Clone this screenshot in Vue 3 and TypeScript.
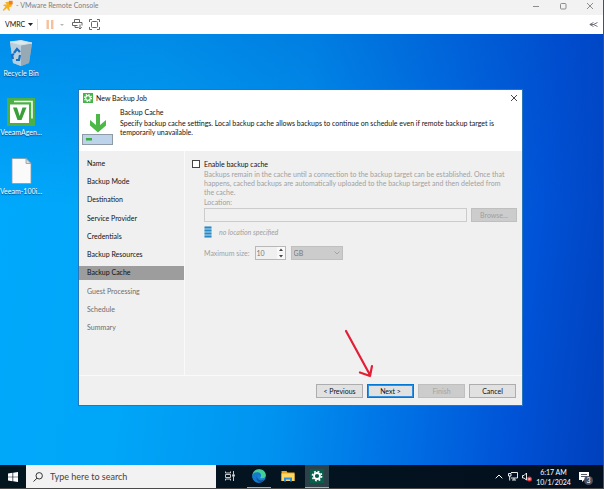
<script setup lang="ts">
import { ref } from 'vue'

interface Step {
  name: string
  enabled: boolean
}

const steps: Step[] = [
  { name: 'Name', enabled: true },
  { name: 'Backup Mode', enabled: true },
  { name: 'Destination', enabled: true },
  { name: 'Service Provider', enabled: true },
  { name: 'Credentials', enabled: true },
  { name: 'Backup Resources', enabled: true },
  { name: 'Backup Cache', enabled: true },
  { name: 'Guest Processing', enabled: false },
  { name: 'Schedule', enabled: false },
  { name: 'Summary', enabled: false },
]
const current = ref('Backup Cache')
const cacheEnabled = ref(false)
const location = ref('')
const maxSize = ref('10')
const unit = ref('GB')
const query = ref('')
</script>

<template>
  <div class="screen">
    <header class="titlebar">
      <svg class="app-icon" viewBox="0 0 12 12">
        <path d="M3 2.5 9 1 10.5 2.5 9.5 6.5 7 7.5 8 11 6 10 5 8 1.5 11 0.8 10 3.5 6.5 1 5.5 2 4.5 5 4.5Z" fill="#f9b01c" />
        <rect x="7" y="0.8" width="3.6" height="3.6" fill="#ef7d22" />
      </svg>
      <span class="app-title">- VMware Remote Console</span>
      <div class="caption-buttons">
        <button aria-label="Minimize"><svg viewBox="0 0 8 8"><path d="M1 4.5h6" /></svg></button>
        <button aria-label="Maximize"><svg viewBox="0 0 8 8"><rect x="1.5" y="1.5" width="5.5" height="5.5" rx="1" /></svg></button>
        <button aria-label="Close"><svg viewBox="0 0 8 8"><path d="M1 1l6 6M7 1L1 7" /></svg></button>
      </div>
    </header>

    <nav class="toolbar">
      <button class="vmrc">VMRC <svg viewBox="0 0 5 3"><path d="M0 0h5L2.5 3Z" fill="#222" /></svg></button>
      <i class="divider"></i>
      <button class="pause" aria-label="Pause"><svg viewBox="0 0 8 9"><path d="M0.5 0h2.4v9H0.5ZM5 0h2.4v9H5Z" fill="#f8bf9b" /></svg></button>
      <button class="mini" aria-label="Power options"><svg viewBox="0 0 4 2"><path d="M0 0h4L2 2Z" fill="#b5b5b5" /></svg></button>
      <button class="tool" aria-label="Send Ctrl+Alt+Del">
        <svg viewBox="0 0 11 11" fill="none" stroke="#666" stroke-width="1"><path d="M2.5 3.5v-3h5v3M5.500 6.500h-5v-3h9.500v3M3 6.500v2h3M8 5.500v4.500M6.300 8.300 8 10l1.700-1.700" /></svg>
      </button>
      <button class="tool" aria-label="Full screen">
        <svg viewBox="0 0 11 11" fill="none" stroke="#666" stroke-width="1"><path d="M0.500 3V0.500H3M8 0.500h2.500V3M10.500 8v2.500H8M3 10.500H0.500V8" /><rect x="2.500" y="2.500" width="6" height="6" rx="1" /></svg>
      </button>
      <button class="collapse" aria-label="Collapse"><svg viewBox="0 0 9 5" fill="none" stroke="#667" stroke-width=".9"><path d="M4.500 .5 .8 2.500 4.500 4.500M8.500 .5 4.500 2.500 8.500 4.500M1 2.500h4" /></svg></button>
    </nav>

    <main class="desktop">
      <div class="shortcuts">
        <a class="shortcut" href="#">
          <svg viewBox="0 0 28 28">
            <path d="M3 3 14 1.500 25 4 22 24 14 27 6 24Z" fill="#8fb3c9" />
            <path d="M3 3 14 6 14 27 6 24Z" fill="#b8cfdb" />
            <path d="M14 6 25 4 22 24 14 27Z" fill="#97a9b5" />
            <path d="M3 3 14 1.500 25 4 14 6Z" fill="#dfe8ec" stroke="#d3e0e6" />
            <path d="M7 14l3-4 3 3M13 16l-1 5H9M6 20l-1-4 2-1" fill="none" stroke="#146fc4" stroke-width="2.200" />
          </svg>
          <span>Recycle Bin</span>
        </a>
        <a class="shortcut" href="#">
          <svg viewBox="0 0 28 28">
            <rect width="28" height="28" fill="#4bb147" />
            <path d="M7 3.500h18v17" fill="none" stroke="#fff" stroke-width="1.500" />
            <rect x="3" y="6.500" width="19" height="18.500" fill="#fff" />
            <path d="M6 9.500h4l2.700 8.500L15.500 9.500h4L14.500 22h-4Z" fill="#3a9f3b" />
          </svg>
          <span>VeeamAgen...</span>
        </a>
        <a class="shortcut" href="#">
          <svg viewBox="0 0 28 28">
            <path d="M5 1.500h14l5 5v20H5Z" fill="#fafafa" stroke="#8b9aa5" stroke-width=".8" />
            <path d="M19 1.500v5h5Z" fill="#ddd" stroke="#8b9aa5" stroke-width=".8" />
          </svg>
          <span>Veeam-100i...</span>
        </a>
      </div>

      <section class="dialog" role="dialog" aria-labelledby="dialog-title">
        <div class="dialog-bar">
          <svg viewBox="0 0 10 10">
            <rect width="10" height="10" fill="#45b549" />
            <circle cx="5" cy="5" r="2.300" fill="none" stroke="#fff" stroke-width="1.200" />
            <circle cx="5" cy="5" r="3.500" fill="none" stroke="#fff" stroke-width="1.200" stroke-dasharray="1.300 1.449" />
          </svg>
          <span id="dialog-title">New Backup Job</span>
          <button aria-label="Close dialog"><svg viewBox="0 0 8 8"><path d="M1 1l6 6M7 1L1 7" /></svg></button>
        </div>
        <div class="intro">
          <svg viewBox="0 0 32 32">
            <path d="M14 0h4v11l6-5v5.500L16 18.500 8 11.500V6l6 5Z" fill="#4db848" />
            <rect x=".5" y="20.500" width="30" height="10" fill="#bcd3ea" stroke="#8e9aa5" />
            <rect x="4" y="24" width="6" height="2.500" fill="#36ad3c" />
          </svg>
          <div>
            <h1>Backup Cache</h1>
            <p>Specify backup cache settings. Local backup cache allows backups to continue on schedule even if remote backup target is temporarily unavailable.</p>
          </div>
        </div>
        <div class="body">
          <ol class="steps">
            <li v-for="s in steps" :key="s.name" :class="{ pending: !s.enabled }">
              <button :class="{ active: s.name === current }" :disabled="!s.enabled" @click="current = s.name">{{ s.name }}</button>
            </li>
          </ol>
          <form class="panel" @submit.prevent>
            <label class="check"><input v-model="cacheEnabled" type="checkbox" />Enable backup cache</label>
            <div class="settings">
              <p>Backups remain in the cache until a connection to the backup target can be established. Once that happens, cached backups are automatically uploaded to the backup target and then deleted from the cache.</p>
              <label for="location">Location:</label>
              <div class="row path">
                <input id="location" v-model="location" type="text" :disabled="!cacheEnabled" />
                <button type="button" :disabled="!cacheEnabled">Browse...</button>
              </div>
              <div class="row volume">
                <svg viewBox="0 0 8 12"><path d="M1 .5h6l.5 1v10h-7v-10Z" fill="#b5d9ee" /><path d="M.5 1.500h7M.5 4.500h7M.5 7.500h7M.5 10.500h7" stroke="#2989c4" stroke-width="2" /></svg>
                <em>no location specified</em>
              </div>
              <div class="row size">
                <label for="max-size">Maximum size:</label>
                <div class="spinner">
                  <input id="max-size" v-model="maxSize" type="text" :disabled="!cacheEnabled" />
                  <svg viewBox="0 0 8 12"><path d="M0 0h8v5.500H0ZM0 6.500h8V12H0Z" fill="#fafafa" /><path d="M2 4 4 1.500 6 4ZM2 8 4 10.500 6 8Z" fill="#444" /></svg>
                </div>
                <div class="unit">
                  <select v-model="unit" aria-label="Size unit" :disabled="!cacheEnabled">
                    <option>GB</option>
                    <option>TB</option>
                  </select>
                  <svg viewBox="0 0 6 4"><path d="M.5 .5 3 3 5.500 .5" fill="none" stroke="#999" stroke-width=".8" /></svg>
                </div>
              </div>
            </div>
          </form>
        </div>
        <footer class="actions">
          <button>&lt; Previous</button>
          <button class="primary">Next &gt;</button>
          <button disabled>Finish</button>
          <button>Cancel</button>
        </footer>
        <svg class="pointer" viewBox="0 0 30 50" fill="none" stroke="#e21f37" stroke-width="2.200" stroke-linecap="round" stroke-linejoin="round">
          <path d="M3 2 27 46M17 43.500 27 47 29 37" />
        </svg>
      </section>
    </main>

    <footer class="taskbar">
      <button class="start" aria-label="Start"><svg viewBox="0 0 10 10"><path d="M0 1.400 4.500 .8v3.900H0ZM5.200 .7 10 0v4.700H5.200ZM0 5.300h4.500v3.900L0 8.600ZM5.200 5.300H10V10L5.200 9.300Z" fill="#fff" /></svg></button>
      <label class="search">
        <svg viewBox="0 0 10 10" fill="none" stroke="#333" stroke-width="1"><circle cx="6.200" cy="3.800" r="3.200" /><path d="M4 6.200 .5 9.500" /></svg>
        <input v-model="query" type="text" placeholder="Type here to search" aria-label="Search" />
      </label>
      <button class="task" aria-label="Task view"><svg class="small" viewBox="0 0 10 10" fill="none" stroke="#ddd" stroke-width=".9"><path d="M.5 .5V2h5V.5M.5 9.500V8h5v1.500M.5 3.500h5v3h-5ZM8.500 0v3M8.500 6v4" /><path d="M7.700 3.700h1.600v1.600H7.700Z" fill="#ddd" /></svg></button>
      <button class="task open" aria-label="Microsoft Edge">
        <svg viewBox="0 0 14 14">
          <circle cx="7" cy="7" r="6.800" fill="#1683d2" />
          <path d="M.3 6C1 2.500 3.800 .2 7.200 .2c4 0 6.600 3 6.600 5.800 0 2.200-1.700 3.300-3.500 3.300-1.600 0-2.300-.7-1.800-1.300.8-1.500-.5-3.400-2.700-3.400C3.500 4.600 1.200 5 .3 6Z" fill="#43cf96" />
          <path d="M.3 6C1.300 3.700 4 2.800 6.300 3.300 9 4 9.600 6.500 8.500 8 7.800 6 5.600 5.800 4.700 7.400 3.700 9.400 5.500 12.500 9 13.300 4.500 15 0 11.500.3 6Z" fill="#1479c9" />
          <path d="M5.200 7c-.7 2.800 2.500 5.300 7 3.800-1 1.600-3 2.700-4.300 2.600C5 12.500 3.600 9.500 5.200 7Z" fill="#10549e" />
        </svg>
      </button>
      <button class="task" aria-label="File Explorer">
        <svg viewBox="0 0 14 14"><path d="M.5 2h5l1 1.500h7V12H.5Z" fill="#e9a51f" /><path d="M.5 4.500h13V12H.5Z" fill="#ffd75e" /><path d="M3 12.500V8.500h8v4H9v-2H5v2Z" fill="#2d8fdd" /></svg>
      </button>
      <button class="task open current" aria-label="Veeam Agent">
        <svg viewBox="0 0 14 14"><rect width="14" height="14" fill="#075f4c" /><circle cx="7" cy="7" r="3" fill="none" stroke="#fff" stroke-width="1.800" /><circle cx="7" cy="7" r="4.600" fill="none" stroke="#fff" stroke-width="1.600" stroke-dasharray="1.800 1.813" /></svg>
      </button>
      <div class="tray">
        <svg class="chevron" viewBox="0 0 8 5" fill="none" stroke="#fff"><path d="M.7 4.300 4 1l3.300 3.300" /></svg>
        <svg class="net" viewBox="0 0 10 9" fill="none" stroke="#fff" stroke-width=".9"><path d="M3 .5h6.500v5.500H3M6 6v2M4 8h4M.5 1.500h2.500v2.500H.5ZM1.700 4v4.500" /></svg>
        <svg class="sound" viewBox="0 0 10 10"><path d="M.5 3.500h1.500L4.500 1v7L2 6H.5Z" fill="none" stroke="#fff" stroke-width=".9" /><circle cx="7.400" cy="7" r="2.500" fill="#e6343c" /><path d="M6.400 6l2 2M8.400 6l-2 2" stroke="#fff" stroke-width=".7" /></svg>
        <div class="clock"><span>6:17 AM</span><span>10/1/2024</span></div>
        <button class="notes" aria-label="3 notifications">
          <svg viewBox="0 0 10 10"><path d="M0 0h10v8H5L3 10V8H0Z" fill="#fff" /><path d="M2 2.500h6M2 4.500h6" stroke="#28313c" stroke-width=".8" /></svg>
          <b>3</b>
        </button>
      </div>
    </footer>
  </div>
</template>

<style>
body {
  margin: 0;
}
</style>

<style scoped>
.screen {
  display: flex;
  flex-direction: column;
  height: 100vh;
  box-sizing: border-box;
  border-right: 1px solid #4a5058;
  border-bottom: 1px solid #4a4a4a;
  font-family: Lato, "Open Sans", sans-serif;
  font-size: 7px;
  line-height: 9px;
  color: #111;
  overflow: hidden;
}
button, input, select {
  box-sizing: border-box;
  margin: 0;
  padding: 0;
  border: 0;
  border-radius: 0;
  background: none;
  font: inherit;
  color: inherit;
}
svg {
  display: block;
  flex: none;
}
.titlebar {
  display: flex;
  align-items: center;
  flex: none;
  height: 15px;
  padding: 0 5px 4px 2px;
  box-sizing: border-box;
  background: #f2f2f2;
}
.app-icon {
  width: 12px;
  height: 12px;
}
.app-title {
  margin-left: 2px;
  color: #808080;
}
.caption-buttons {
  display: flex;
  gap: 11px;
  margin-left: auto;
}
.caption-buttons button {
  display: grid;
  place-items: center;
  width: 16px;
}
.caption-buttons svg {
  width: 8px;
  height: 8px;
  fill: none;
  stroke: #8d8d8d;
  stroke-width: 1;
}
.toolbar {
  display: flex;
  align-items: center;
  flex: none;
  height: 19px;
  padding: 0 5px;
  background: #fff;
}
.vmrc {
  display: flex;
  align-items: center;
  gap: 3px;
}
.vmrc svg {
  width: 5px;
  height: 3px;
}
.divider {
  width: 1px;
  height: 11px;
  margin: 0 8px 0 4px;
  background: #ddd;
}
.pause svg {
  width: 8px;
  height: 9px;
}
.mini {
  margin: 0 8px 0 6px;
}
.mini svg {
  width: 4px;
  height: 2px;
}
.tool {
  margin-right: 6px;
}
.tool svg {
  width: 11px;
  height: 11px;
}
.collapse {
  margin-left: auto;
}
.collapse svg {
  width: 9px;
  height: 5px;
}
.desktop {
  position: relative;
  flex: 1;
  background:
    linear-gradient(180deg, rgba(0, 60, 180, 0.25), rgba(0, 60, 180, 0) 40%),
    linear-gradient(97deg, #00a9fc 0%, #00a6f8 25%, #0094f0 48%, #006ee4 70%, #0052d6 86%, #0040bc 100%);
}
.shortcuts {
  display: flex;
  flex-direction: column;
  gap: 20px;
  width: 42px;
  padding-top: 5px;
  line-height: 10px;
}
.shortcut {
  display: flex;
  flex-direction: column;
  align-items: center;
  gap: 1px;
  color: #fff;
  text-decoration: none;
  white-space: nowrap;
  text-shadow: 0 1px 1px rgba(0, 30, 80, 0.7);
}
.shortcut svg {
  width: 28px;
  height: 28px;
}
.dialog {
  position: absolute;
  top: 55px;
  left: 78px;
  right: 80px;
  display: flex;
  flex-direction: column;
  border: 1px solid #2876b8;
  box-sizing: border-box;
  background: #fff;
}
.dialog-bar {
  display: flex;
  align-items: center;
  gap: 3px;
  height: 16px;
  padding: 0 4px;
}
.dialog-bar svg {
  width: 10px;
  height: 10px;
}
.dialog-bar button {
  margin-left: auto;
}
.dialog-bar button svg {
  width: 8px;
  height: 8px;
  stroke: #333;
  stroke-width: 0.9;
}
.intro {
  display: flex;
  gap: 6px;
  height: 45px;
  padding: 2px 10px 0 3px;
  box-sizing: border-box;
}
.intro > svg {
  width: 32px;
  height: 32px;
  margin-top: 6px;
}
h1 {
  margin: 0 0 2px;
  font: inherit;
}
p {
  margin: 0;
}
.body {
  display: flex;
  height: 224px;
  background: #f0f0f0;
}
.steps {
  display: grid;
  grid-template-rows: repeat(10, 1fr);
  width: 105px;
  height: 183px;
  margin: 0;
  padding: 3px 0 38px;
  list-style: none;
  border-right: 1px solid #fafafa;
}
.steps li {
  display: flex;
  align-items: center;
}
.steps button {
  width: 100%;
  height: 14px;
  padding-left: 8px;
  text-align: left;
}
.steps .active {
  background: #9d9d9d;
}
.pending {
  color: #6d6d6d;
}
.panel {
  flex: 1;
  min-width: 0;
  padding: 8px 5px 0 7px;
}
.check {
  display: flex;
  align-items: center;
  gap: 4px;
  height: 10px;
}
.check input {
  appearance: none;
  width: 8px;
  height: 8px;
  border: 1px solid #444;
  background: #fff;
}
.settings {
  padding-left: 12px;
  color: #a0a0a0;
}
.settings p {
  margin: 1px 0;
  padding-right: 8px;
}
.settings > label {
  display: block;
}
.row {
  display: flex;
  align-items: center;
}
.path {
  gap: 4px;
  margin-top: 1px;
}
.path input {
  flex: 1;
  min-width: 0;
  height: 14px;
  border: 1px solid #ccc;
}
.path button {
  width: 46px;
  height: 14px;
  border: 1px solid #bfbfbf;
  background: #ccc;
}
.volume {
  gap: 7px;
  margin-top: 4px;
}
.volume svg {
  width: 8px;
  height: 12px;
}
.size {
  gap: 5px;
  margin-top: 8px;
}
.spinner {
  display: flex;
  align-items: center;
  width: 31px;
  height: 14px;
  box-sizing: border-box;
  border: 1px solid #b8b8b8;
  color: #777;
}
.spinner input {
  flex: 1;
  min-width: 0;
  padding-left: 1px;
}
.spinner svg {
  width: 8px;
  height: 12px;
}
.unit {
  display: grid;
  align-items: center;
  width: 52px;
  color: #777;
}
.unit select,
.unit svg {
  grid-area: 1 / 1;
}
.unit select {
  appearance: none;
  height: 14px;
  padding-left: 2px;
  border: 1px solid #bfbfbf;
  background: #ccc;
  opacity: 1;
}
.unit svg {
  justify-self: end;
  width: 6px;
  height: 4px;
  margin-right: 3px;
  pointer-events: none;
}
.actions {
  display: flex;
  justify-content: flex-end;
  gap: 4px;
  padding: 8px 6px 7px;
  border-top: 1px solid #fafafa;
  background: #f0f0f0;
}
.actions button {
  width: 47px;
  height: 14px;
  border: 1px solid #adadad;
  background: #e1e1e1;
}
.actions .primary {
  border: 1px solid #0078d7;
  outline: 1px solid #3391df;
  outline-offset: -2px;
}
.actions button:disabled {
  border-color: #bfbfbf;
  background: #ccc;
  color: #a3a3a3;
}
.pointer {
  position: absolute;
  right: 149px;
  bottom: 26px;
  width: 30px;
  height: 50px;
}
.taskbar {
  display: flex;
  align-items: stretch;
  flex: none;
  height: 23px;
  background: linear-gradient(90deg, #03161f, #03101f);
}
.start {
  display: grid;
  place-items: center;
  width: 26px;
}
.start svg {
  width: 10px;
  height: 10px;
}
.search {
  display: flex;
  align-items: center;
  gap: 7px;
  width: 190px;
  padding: 0 7px;
  box-sizing: border-box;
  background: #f2f2f2;
}
.search svg {
  width: 10px;
  height: 10px;
}
.search input {
  flex: 1;
  min-width: 0;
  font-size: 9px;
  line-height: 12px;
}
.search input::placeholder {
  color: #444;
  opacity: 1;
}
.task {
  display: grid;
  place-items: center;
  width: 24px;
  margin-left: 2px;
  border-bottom: 1px solid transparent;
}
.task + .task {
  margin-left: 5px;
}
.task svg {
  width: 14px;
  height: 14px;
}
.task .small {
  width: 10px;
  height: 10px;
}
.open {
  border-bottom-color: #76b9ed;
}
.current {
  background: #2d4149;
}
.tray {
  display: flex;
  align-items: center;
  margin-left: auto;
  padding-right: 10px;
  color: #fff;
}
.chevron {
  width: 8px;
  height: 5px;
  margin-right: 5px;
}
.net {
  width: 10px;
  height: 9px;
  margin-right: 4px;
}
.sound {
  width: 10px;
  height: 10px;
}
.clock {
  display: flex;
  flex-direction: column;
  align-items: center;
  width: 43px;
  line-height: 10px;
}
.notes {
  position: relative;
  width: 14px;
  height: 16px;
  margin-left: 4px;
}
.notes svg {
  width: 10px;
  height: 10px;
}
.notes b {
  position: absolute;
  right: 0;
  bottom: 0;
  width: 9px;
  height: 9px;
  border-radius: 50%;
  background: #4b5059;
  font-weight: 400;
}
</style>
